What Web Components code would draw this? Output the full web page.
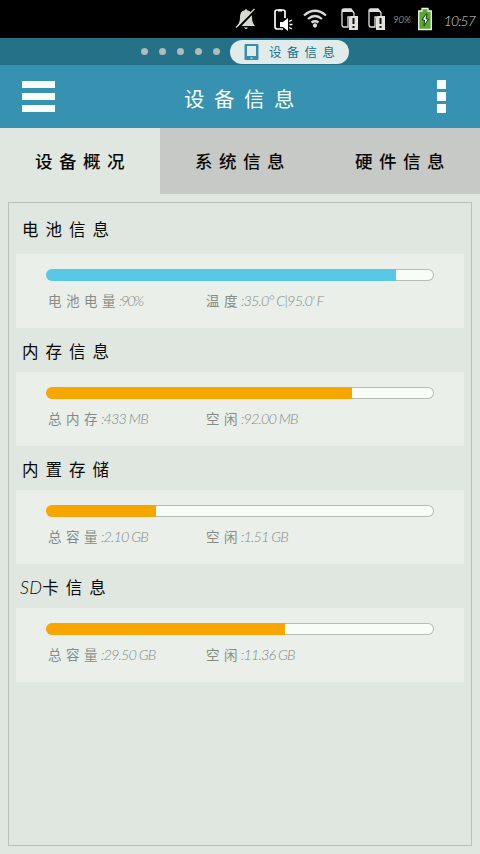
<!DOCTYPE html>
<html lang="zh-CN">
<head>
<meta charset="utf-8">
<title>设备信息</title>
<style>
body{margin:0;background:#e0e6e0;font-family:"Lato","Noto Sans CJK SC",sans-serif}
</style>
</head>
<body>
<device-app></device-app>
<script>
const define = (name, html, setup) => customElements.define(name, class extends HTMLElement {
  connectedCallback() {
    if (this.shadowRoot) return;
    const t = document.createElement('template');
    t.innerHTML = html;
    this.attachShadow({mode: 'open'}).append(t.content.cloneNode(true));
    if (setup) setup(this);
  }
});

define('status-bar', `
<style>
:host{display:block;height:38px;background:#000;color:#d6d8d4}
.row{display:grid;grid-template-columns:236px 38px 30px 36px 27px 26px 25px 17px 45px;height:38px;align-items:center}
svg{display:block;overflow:visible}
.n{font:italic 300 9.5px Lato,sans-serif;padding-top:1px}
.t{font:italic 300 14px Lato,sans-serif;letter-spacing:-.9px;padding:3px 5px 0 0;text-align:right}
</style>
<div class="row">
<span></span>
<svg width="38" height="38"><path fill="#d6d8d2" d="M1 26Q4 23 4 17Q4 11 8.500 10.500Q10 7.500 11.500 10.500Q16 11 16 17Q16 23 19 26ZM8 27.500h4q-2 3-4 0"/><path d="M1.500 28.500L18.500 11" stroke="#000" stroke-width="2.200"/><path d="M0 27.500L18.500 9" stroke="#d6d8d2" stroke-width="1.200"/></svg>
<svg width="30" height="38"><path d="M9 29H3.500Q1 29 1 27V12Q1 10 3 10H9Q11 10 11 12V18" fill="none" stroke="#fff" stroke-width="1.700"/><path d="M4 10.500h4" stroke="#fff" stroke-width="2"/><path fill="#fff" d="M6 22h3l5-4v13l-5-4H6z"/><path d="M15 21.500l3-1.500M15.500 24.500h3M15 27.500l3 1.500" stroke="#fff" stroke-width="1.300"/></svg>
<svg width="36" height="38" fill="none" stroke="#d8dad5" stroke-width="2.300"><path d="M0 15.500Q11 6 22 15.500M4 19Q11 13 18 19M7.500 22.500Q11 20 14.500 22.500"/><circle cx="11" cy="25.500" r="1" fill="#d8dad5"/></svg>
<svg width="27" height="38"><path d="M2 11Q2 9 4 9H11L14 13V17H8V27H4Q2 27 2 25Z" fill="#000" stroke="#e0e2df" stroke-width="1.300"/><path d="M2 12V9H11L14 12Z" fill="#ddd"/><path d="M9 18l2-2h7v14H9z" fill="#e2e3df"/><path d="M13.500 18v6M13.500 26v2" stroke="#111" stroke-width="2"/></svg>
<svg width="25" height="38"><path d="M2 11Q2 9 4 9H11L14 13V17H8V27H4Q2 27 2 25Z" fill="#000" stroke="#e0e2df" stroke-width="1.300"/><path d="M2 12V9H11L14 12Z" fill="#ddd"/><path d="M9 18l2-2h7v14H9z" fill="#e2e3df"/><path d="M13.500 18v6M13.500 26v2" stroke="#111" stroke-width="2"/></svg>
<span class="n">90%</span>
<svg width="17" height="38"><path d="M.7 11H4V8.500h6V11h3.300V29.500H.7z" fill="#5ba539" stroke="#eef5e6" stroke-width="1.300"/><path d="M8 14l-4 6h2.500l-.5 6 4.500-7H8l1-5z" fill="#fff" stroke="#163a0b" stroke-width="1"/></svg>
<span class="t">10:57</span>
</div>`);

define('page-strip', `
<style>
:host{display:flex;height:27px;background:#247188;align-items:center;padding-left:141px;box-sizing:border-box;gap:11px}
i{width:7px;height:7px;border-radius:50%;background:#b1bbb9}
.pill{margin-left:-1px;width:119px;height:24px;border-radius:12px;background:#e1ecea;display:flex;align-items:center;color:#236f87;box-sizing:border-box;padding-left:14px}
.txt{font-size:12.500px;letter-spacing:5.300px;margin-left:10px;padding-top:2px;line-height:20px;white-space:nowrap}
</style>
<i></i><i></i><i></i><i></i><i></i>
<div class="pill"><svg width="15" height="17"><rect x=".5" y="1" width="14" height="16" rx="1" fill="#388dac"/><rect x="3" y="3" width="9" height="10" fill="#e1ecea"/><rect x="6.500" y="14.500" width="2" height="1.200" fill="#e1ecea"/></svg><span class="txt"><slot></slot></span></div>`);

define('app-header', `
<style>
:host{display:flex;justify-content:space-between;align-items:center;height:63px;background:#3791b0;color:#f8fffb;padding:0 34px 0 22px;box-sizing:border-box}
.menu,.more{display:flex;flex-direction:column}
.menu{gap:5px;width:33px}.menu b{height:7px;background:#f8fffb}
.more{gap:3px;width:9px}.more b{height:9px;background:#f8fffb}
.title{font-size:20.500px;letter-spacing:9.500px;padding:4px 4px 0 0;line-height:30px}
</style>
<div class="menu"><b></b><b></b><b></b></div><div class="title"><slot></slot></div><div class="more"><b></b><b></b><b></b></div>`);

define('tab-item', `
<style>
:host{display:flex;width:160px;height:66px;align-items:center;background:#c6c9c6;color:#080a08;font-size:17.500px;letter-spacing:6.500px;font-weight:500;box-sizing:border-box;padding:0 0 2px 35px;white-space:nowrap}
:host([active]){background:#e0e6e0}
</style><slot></slot>`);

define('info-section', `
<style>
:host{display:block}
.h{height:44px;padding:2px 0 0 6px;display:flex;align-items:center;font-size:16.500px;letter-spacing:7px;color:#080a08;box-sizing:border-box}
:host(:first-child) .h{padding-bottom:9px}
.card{height:74px;background:#eaefea;padding:15px 30px 0;box-sizing:border-box}
.bar{height:12px;border:1px solid transparent;border-radius:6px;box-sizing:border-box;background:linear-gradient(90deg,var(--fill,#f7a600) calc(var(--w) - 1px),#f9fdf8 0) padding-box,linear-gradient(90deg,var(--fill,#f7a600) var(--w),#b5bdb6 0) border-box;background-origin:padding-box,border-box}
.d{display:grid;grid-template-columns:158px 1fr;padding:10px 0 0 2px;line-height:20px;font-size:13.500px;color:#858c86;white-space:nowrap}
</style>
<div class="h"><slot name="title"></slot></div>
<div class="card"><div class="bar"></div><div class="d"><slot></slot></div></div>`,
el => { el.style.setProperty('--w', el.getAttribute('fill') + 'px'); });

define('latin-text', `
<style>
:host{font-family:Lato,sans-serif;font-style:italic;font-weight:300;font-size:var(--size,14.500px);letter-spacing:var(--ls,-.8px)}
</style><slot></slot>`);

define('info-item', `
<style>:host{display:flex;align-items:baseline}.k{letter-spacing:4.500px}.v{margin-left:-1px;display:block}</style>
<span class="k"><slot></slot></span><latin-text class="v"><slot name="value"></slot></latin-text>`,
el => {
  const v = el.shadowRoot.querySelector('.v');
  v.style.setProperty('--ls', (el.getAttribute('tracking') || '-.9') + 'px');
});

define('device-app', `
<style>
:host{display:flex;flex-direction:column;height:854px;width:480px;overflow:hidden}
nav{display:flex}
.panel{margin:8px;border:1px solid #b9c0ba;padding:7px;flex:1}
</style>
<status-bar></status-bar>
<page-strip>设备信息</page-strip>
<app-header>设备信息</app-header>
<nav><tab-item active>设备概况</tab-item><tab-item>系统信息</tab-item><tab-item>硬件信息</tab-item></nav>
<div class="panel">
<info-section fill="350" style="--fill:#58c8e4"><span slot="title">电池信息</span>
<info-item tracking="-1.8">电池电量<span slot="value">:90%</span></info-item><info-item tracking="-.9">温度<span slot="value">:35.0° C|95.0' F</span></info-item></info-section>
<info-section fill="306"><span slot="title">内存信息</span>
<info-item>总内存<span slot="value">:433 MB</span></info-item><info-item>空闲<span slot="value">:92.00 MB</span></info-item></info-section>
<info-section fill="110"><span slot="title">内置存储</span>
<info-item>总容量<span slot="value">:2.10 GB</span></info-item><info-item>空闲<span slot="value">:1.51 GB</span></info-item></info-section>
<info-section fill="239"><span slot="title" style="margin-left:-2px"><latin-text style="--size:18px;--ls:.3px">SD</latin-text>卡信息</span>
<info-item>总容量<span slot="value">:29.50 GB</span></info-item><info-item>空闲<span slot="value">:11.36 GB</span></info-item></info-section>
</div>`);
</script>
</body>
</html>
